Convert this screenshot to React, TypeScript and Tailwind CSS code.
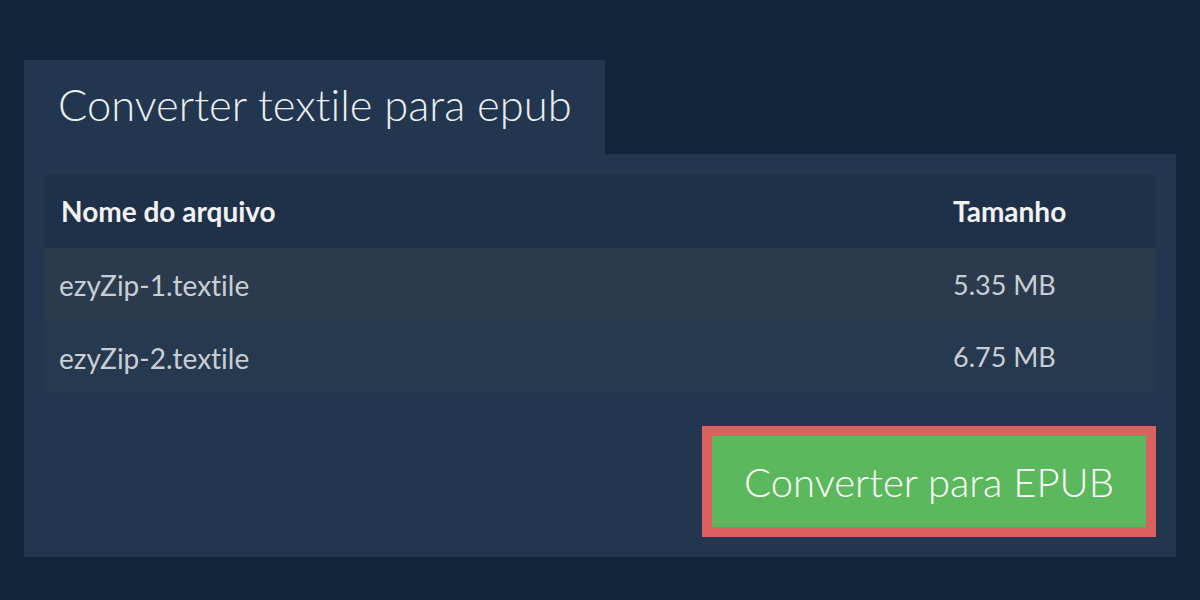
const FILES = [
  { name: 'ezyZip-1.textile', size: '5.35 MB' },
  { name: 'ezyZip-2.textile', size: '6.75 MB' },
]

export default function App() {
  return (
    <div
      className="w-full h-[600px] bg-[#10243a] px-6 pt-[60px] [font-variant-ligatures:none]"
      style={{ fontFamily: 'Lato, "Open Sans", sans-serif' }}
    >
      <div className="w-[581px] h-[94px] bg-[#22364f] pl-[34px] pt-[16px]">
        <h1 className="text-[43.5px] font-light leading-[56px] text-[#eceef0]">Converter textile para epub</h1>
      </div>

      <div className="bg-[#22364f] px-5 pt-[21px] pb-5">
        <table className="w-full border-collapse">
          <thead>
            <tr className="h-[73px] bg-[#1f3149]">
              <th className="pl-[17px] pb-[2px] text-left text-[28px] font-bold text-[#f2f2f2]">Nome do arquivo</th>
              <th className="w-[220px] pl-[17px] pb-[2px] text-left text-[28px] font-bold text-[#f2f2f2]">Tamanho</th>
            </tr>
          </thead>
          <tbody>
            {FILES.map((f, i) => (
              <tr key={f.name} className={i === 0 ? 'h-[74px] bg-[#2b3b4d]' : 'h-[71px] bg-[#26394f]'}>
                <td className="pl-[15px] text-[28px] text-[#c9ced4]">{f.name}</td>
                <td className="pl-[17px] text-[27px] text-[#c9ced4]">{f.size}</td>
              </tr>
            ))}
          </tbody>
        </table>

        <div className="flex justify-end mt-[33px]">
          <button className="w-[454px] h-[111px] border-[10px] border-[#dc605d] bg-[#5cb85c] text-[40px] font-light text-white">
            Converter para EPUB
          </button>
        </div>
      </div>
    </div>
  )
}
